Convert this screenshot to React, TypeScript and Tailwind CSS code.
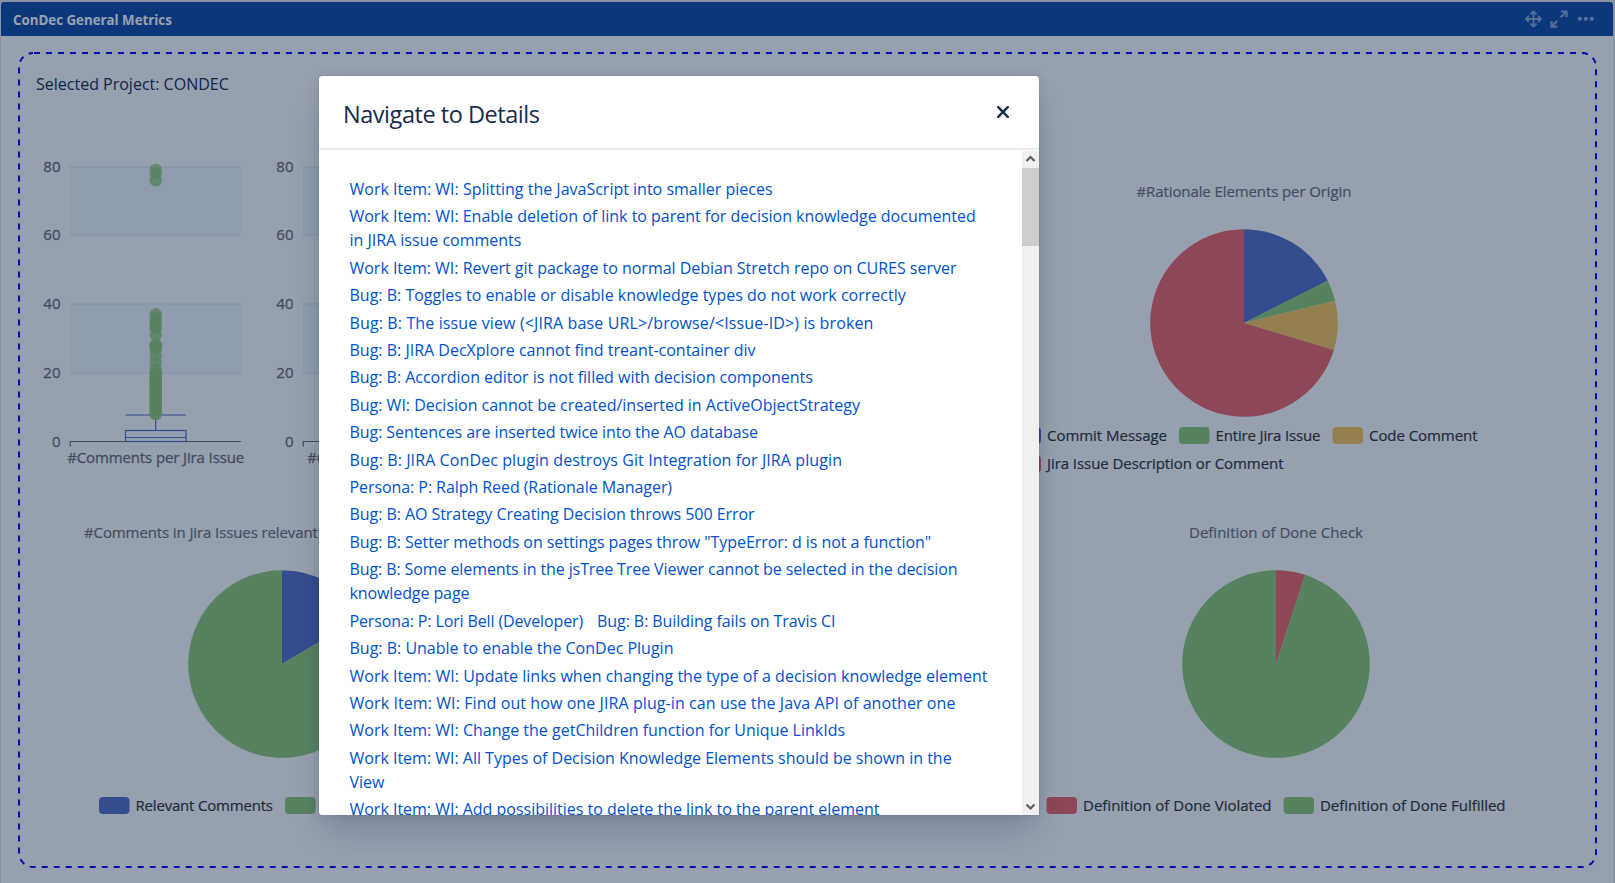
import React from "react";

type Slice = { value: number; color: string };
type Key = { x: number; y: number; color: string; label?: string; width?: number };

const BLUE = "#5470c6";
const GREEN = "#91cc75";
const YELLOW = "#fac858";
const RED = "#ee6666";

function slicePath(cx: number, cy: number, r: number, from: number, to: number) {
  const point = (deg: number) => {
    const a = (deg * Math.PI) / 180;
    return `${cx + r * Math.sin(a)} ${cy - r * Math.cos(a)}`;
  };
  return `M${cx} ${cy}L${point(from)}A${r} ${r} 0 ${to - from > 180 ? 1 : 0} 1 ${point(to)}Z`;
}

function Pie({ cx, cy, slices }: { cx: number; cy: number; slices: Slice[] }) {
  let start = 0;
  return (
    <g>
      {slices.map((s) => {
        const from = start;
        start += s.value;
        return <path key={s.color} d={slicePath(cx, cy, 93.8, from, start)} fill={s.color} />;
      })}
    </g>
  );
}

function Legend({ items }: { items: Key[] }) {
  return (
    <g fontSize="15">
      {items.map((k) => (
        <g key={`${k.x}-${k.y}`}>
          <rect x={k.x} y={k.y} width="30.5" height="17" rx="4" fill={k.color} />
          {k.label && (
            <text x={k.x + 36.5} y={k.y + 13.5} textLength={k.width} fill="#333333" stroke="#333333" strokeWidth="0.2">
              {k.label}
            </text>
          )}
        </g>
      ))}
    </g>
  );
}

const OUTLIERS = [
  79, 78, 76, 37, 36, 35, 34, 33, 33, 31, 28, 28, 27, 27, 25, 23, 21, 20, 20, 19, 19, 18, 18, 17, 17, 16, 16, 15, 15,
  14, 14, 13, 13, 12, 12, 11, 11, 10, 10, 9, 9, 8, 8,
];

function BoxPlot({ label, width, outliers }: { label: string; width: number; outliers: number[] }) {
  const y = (v: number) => 321.5 - v * 3.4375;
  return (
    <svg className="block h-[380px] w-[233px] shrink-0" viewBox="0 0 233 380" fontSize="15">
      <rect x="35" y={y(80)} width="171" height="68.5" fill="#f2faff" />
      <rect x="35" y={y(40)} width="171" height="68.5" fill="#f2faff" />
      {[80, 60, 40, 20, 0].map((v) => (
        <g key={v}>
          {v > 0 && <path d={`M35 ${Math.round(y(v))}H206`} stroke="#dbe3ef" strokeWidth="1.2" />}
          <text x="25.5" y={y(v) + 5} textAnchor="end" fill="#6e7079" stroke="#6e7079" strokeWidth="0.3">
            {v}
          </text>
        </g>
      ))}
      <path d="M35.3 326.5V321.5H206" fill="none" stroke="#6e7079" strokeWidth="1.2" />
      <g fill="none" stroke={BLUE} strokeWidth="1.2">
        <path d="M90.5 295H151M120.7 295V310.5M90.5 317.5H151" />
        <rect x="90.5" y="310.5" width="60.5" height="11" />
      </g>
      <g fill={GREEN}>
        {outliers.map((v, i) => (
          <circle key={i} cx="120.7" cy={y(v)} r="6.2" fillOpacity="0.8" />
        ))}
      </g>
      <text
        x="120.7"
        y="342.5"
        textAnchor="middle"
        textLength={width}
        fill="#6e7079"
        stroke="#6e7079"
        strokeWidth="0.3"
      >
        {label}
      </text>
    </svg>
  );
}

type Link = { text: string; tracking?: string };

const LINKS: Link[][] = [
  [{ text: "Work Item: WI: Splitting the JavaScript into smaller pieces" }],
  [
    {
      text: "Work Item: WI: Enable deletion of link to parent for decision knowledge documented in JIRA issue comments",
      tracking: "tracking-[-0.015px]",
    },
  ],
  [{ text: "Work Item: WI: Revert git package to normal Debian Stretch repo on CURES server", tracking: "tracking-[-0.02px]" }],
  [{ text: "Bug: B: Toggles to enable or disable knowledge types do not work correctly" }],
  [{ text: "Bug: B: The issue view (<JIRA base URL>/browse/<Issue-ID>) is broken", tracking: "tracking-[0.128px]" }],
  [{ text: "Bug: B: JIRA DecXplore cannot find treant-container div" }],
  [{ text: "Bug: B: Accordion editor is not filled with decision components", tracking: "tracking-[-0.02px]" }],
  [{ text: "Bug: WI: Decision cannot be created/inserted in ActiveObjectStrategy", tracking: "tracking-[-0.015px]" }],
  [{ text: "Bug: Sentences are inserted twice into the AO database", tracking: "tracking-[-0.067px]" }],
  [{ text: "Bug: B: JIRA ConDec plugin destroys Git Integration for JIRA plugin", tracking: "tracking-[0.1px]" }],
  [{ text: "Persona: P: Ralph Reed (Rationale Manager)", tracking: "tracking-[-0.07px]" }],
  [{ text: "Bug: B: AO Strategy Creating Decision throws 500 Error", tracking: "tracking-[-0.058px]" }],
  [{ text: 'Bug: B: Setter methods on settings pages throw "TypeError: d is not a function"', tracking: "tracking-[-0.06px]" }],
  [
    {
      text: "Bug: B: Some elements in the jsTree Tree Viewer cannot be selected in the decision knowledge page",
      tracking: "tracking-[-0.098px]",
    },
  ],
  [
    { text: "Persona: P: Lori Bell (Developer)", tracking: "tracking-[-0.127px]" },
    { text: "Bug: B: Building fails on Travis CI", tracking: "tracking-[-0.07px]" },
  ],
  [{ text: "Bug: B: Unable to enable the ConDec Plugin" }],
  [{ text: "Work Item: WI: Update links when changing the type of a decision knowledge element", tracking: "tracking-[0.016px]" }],
  [{ text: "Work Item: WI: Find out how one JIRA plug-in can use the Java API of another one", tracking: "tracking-[0.085px]" }],
  [{ text: "Work Item: WI: Change the getChildren function for Unique LinkIds" }],
  [
    {
      text: "Work Item: WI: All Types of Decision Knowledge Elements should be shown in the View",
      tracking: "tracking-[-0.01px]",
    },
  ],
  [{ text: "Work Item: WI: Add possibilities to delete the link to the parent element", tracking: "tracking-[-0.013px]" }],
];

function HeaderIcons() {
  return (
    <svg className="h-6 w-[80px]" viewBox="0 0 80 24" fill="none" stroke="#8fa9d4" strokeWidth="1.9">
      <path d="M5 12H20M12.5 4.5V19.5" />
      <path d="M9.4 7.4L12.5 4.6L15.6 7.4M9.4 16.6L12.5 19.4L15.6 16.6M7.9 8.9L5.1 12L7.9 15.1M17.1 8.9L19.9 12L17.1 15.1" />
      <path d="M39.8 10.2L45 5M36.2 13.8L31 19" strokeWidth="2.2" />
      <path d="M40 4.5H45.6V10.1M30.5 14V19.6H36.1" strokeWidth="2.2" />
      <g fill="#8fa9d4" stroke="none">
        <circle cx="58.8" cy="11.8" r="2.1" />
        <circle cx="64.8" cy="11.8" r="2.1" />
        <circle cx="70.8" cy="11.8" r="2.1" />
      </g>
    </svg>
  );
}

function Dashboard() {
  return (
    <div className="flex h-[883px] w-[1615px] flex-col bg-[#e6e9f0] px-px pt-0.5">
      <div className="mr-px flex h-[34px] shrink-0 items-center justify-between rounded-t-[3px] bg-[#104aa6] pl-3 pr-[12px]">
        <h2 className="pt-[3px] text-[13.3px] font-bold text-white">ConDec General Metrics</h2>
        <HeaderIcons />
      </div>
      <div className="mr-px flex grow flex-col bg-white pl-[17px] pr-4 pt-4">
        <div className="relative flex h-[816px] flex-col px-[17px] pt-5">
          <svg className="absolute inset-0 h-full w-full" fill="none">
            <rect
              x="1"
              y="1"
              width="1577"
              height="814"
              rx="14"
              stroke="#0000ff"
              strokeWidth="2"
              strokeDasharray="6 6"
              strokeDashoffset="-1"
            />
          </svg>
          <p className="h-12 pl-px text-base leading-6 text-[#172b4d]">Selected Project: CONDEC</p>
          <div className="flex h-[380px]">
            <BoxPlot label="#Comments per Jira Issue" width={177} outliers={OUTLIERS} />
            <BoxPlot label="#Commits per Jira Issue" width={163} outliers={[]} />
            <svg className="ml-[466px] block h-[380px] w-[579px] shrink-0" viewBox="967 120 579 380">
              <text
                x="1244"
                y="197"
                textAnchor="middle"
                textLength="215"
                fontSize="15"
                fill="#6e7079"
                stroke="#6e7079"
                strokeWidth="0.2"
              >
                #Rationale Elements per Origin
              </text>
              <Pie
                cx={1244}
                cy={323}
                slices={[
                  { value: 63.2, color: BLUE },
                  { value: 13, color: GREEN },
                  { value: 30.5, color: YELLOW },
                  { value: 253.3, color: RED },
                ]}
              />
              <Legend
                items={[
                  { x: 1010.5, y: 427, color: BLUE, label: "Commit Message", width: 120 },
                  { x: 1179, y: 427, color: GREEN, label: "Entire Jira Issue", width: 105 },
                  { x: 1332.5, y: 427, color: YELLOW, label: "Code Comment", width: 108.5 },
                  { x: 1010.5, y: 455.5, color: RED, label: "Jira Issue Description or Comment", width: 236.5 },
                ]}
              />
            </svg>
          </div>
          <div className="flex h-[360px] justify-between">
            <svg className="block h-[360px] w-[497px]" viewBox="35 500 497 360">
              <text x="84" y="538" fontSize="15" textLength="394" fill="#6e7079" stroke="#6e7079" strokeWidth="0.2">
                #Comments in Jira Issues relevant to Decision Knowledge
              </text>
              <Pie
                cx={282}
                cy={664}
                slices={[
                  { value: 59.3, color: BLUE },
                  { value: 300.7, color: GREEN },
                ]}
              />
              <Legend
                items={[
                  { x: 99, y: 797, color: BLUE, label: "Relevant Comments", width: 137.5 },
                  { x: 285, y: 797, color: GREEN },
                ]}
              />
            </svg>
            <svg className="block h-[360px] w-[541px]" viewBox="1039 500 541 360">
              <text
                x="1276"
                y="538"
                textAnchor="middle"
                textLength="174"
                fontSize="15"
                fill="#6e7079"
                stroke="#6e7079"
                strokeWidth="0.2"
              >
                Definition of Done Check
              </text>
              <Pie
                cx={1276}
                cy={664}
                slices={[
                  { value: 18.1, color: RED },
                  { value: 341.9, color: GREEN },
                ]}
              />
              <Legend
                items={[
                  { x: 1046.5, y: 797, color: RED, label: "Definition of Done Violated", width: 188.5 },
                  { x: 1283.5, y: 797, color: GREEN, label: "Definition of Done Fulfilled", width: 185.5 },
                ]}
              />
            </svg>
          </div>
        </div>
      </div>
    </div>
  );
}

function Dialog() {
  return (
    <section className="flex h-[739px] w-[720px] flex-col overflow-hidden rounded-t-[3px] rounded-bl-[3px] bg-white shadow-[0_20px_32px_-8px_rgba(9,30,66,0.24),0_0_1px_rgba(9,30,66,0.4),0_0_12px_rgba(9,30,66,0.1)]">
      <header className="flex h-[74px] shrink-0 items-center justify-between border-b-2 border-[#ebecf0] pb-px pl-6 pr-[30px]">
        <h1 className="pt-1 text-[23.5px] leading-7 tracking-[-0.46px] text-[#172b4d]">Navigate to Details</h1>
        <svg className="h-3 w-3" viewBox="0 0 12 12" stroke="#172b4d" strokeWidth="2.4" strokeLinecap="round">
          <path d="M1.2 1.2L10.8 10.8M10.8 1.2L1.2 10.8" />
        </svg>
      </header>
      <div className="mt-px flex min-h-0 grow">
        <div className="flex grow flex-col overflow-hidden pl-[30.5px] pr-8 pt-[26px] text-base leading-6 text-[#0052cc]">
          {LINKS.map((line) => (
            <div key={line[0].text} className="flex shrink-0 gap-3.5 pb-[3.42px]">
              {line.map((link) => (
                <a key={link.text} className={link.tracking}>
                  {link.text}
                </a>
              ))}
            </div>
          ))}
        </div>
        <div className="flex w-[17px] shrink-0 flex-col bg-[#f0f0f0]">
          <svg className="h-[17px] w-[17px]" viewBox="0 0 17 17" fill="none" stroke="#606060" strokeWidth="2.2">
            <path d="M4.5 10L8.5 6L12.5 10" />
          </svg>
          <div className="h-[78px] bg-[#cdcdcd]" />
          <svg className="mt-auto h-[17px] w-[17px]" viewBox="0 0 17 17" fill="none" stroke="#606060" strokeWidth="2.2">
            <path d="M4.5 6.5L8.5 10.5L12.5 6.5" />
          </svg>
        </div>
      </div>
    </section>
  );
}

export default function App() {
  return (
    <main className="relative h-[883px] w-[1615px] overflow-hidden font-['Open_Sans','Noto_Sans',sans-serif]">
      <Dashboard />
      <div className="absolute inset-0 flex items-start bg-[#091e42]/[0.423] pl-[319px] pt-[76px]">
        <Dialog />
      </div>
    </main>
  );
}
